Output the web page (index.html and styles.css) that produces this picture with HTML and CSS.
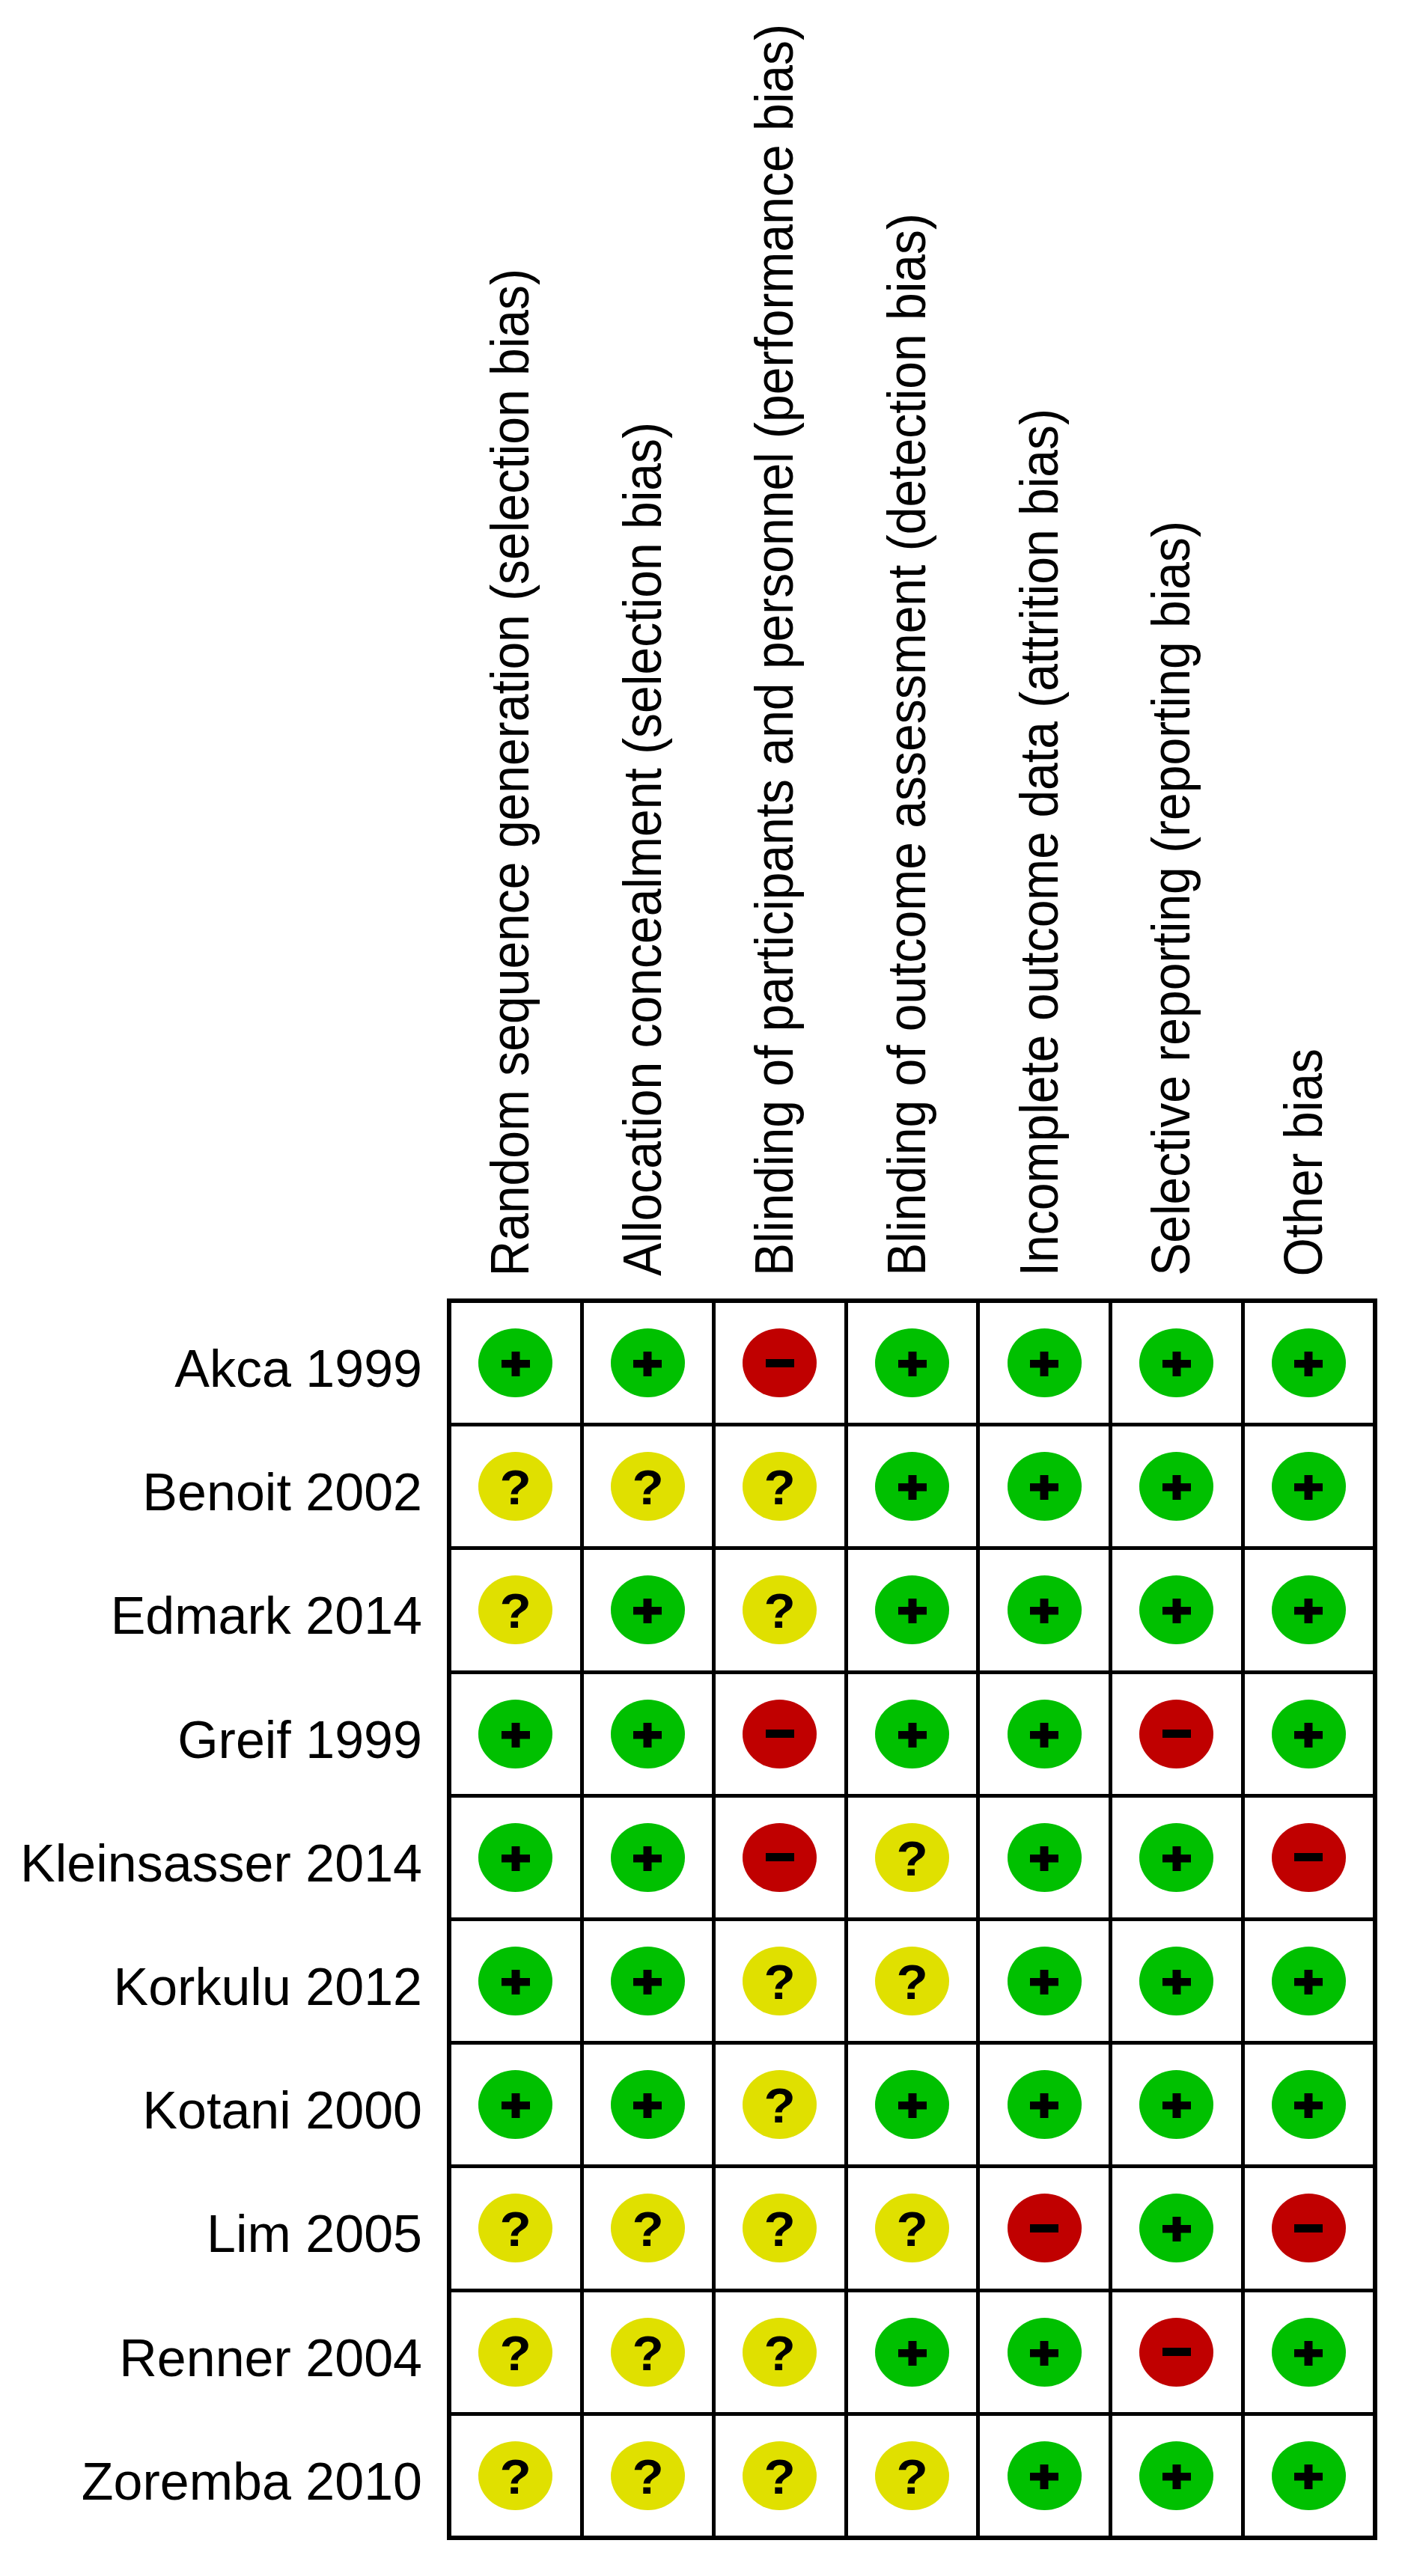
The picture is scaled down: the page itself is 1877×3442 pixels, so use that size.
FILE: index.html
```html
<!DOCTYPE html>
<html lang="en">
<head>
<meta charset="utf-8">
<title>Risk of bias summary</title>
<link rel="stylesheet" href="styles.css">
</head>
<body>
<div class="page">
  <div class="corner"></div>
  <div class="heads">
    <div class="head"><span>Random sequence generation (selection bias)</span></div>
    <div class="head"><span>Allocation concealment (selection bias)</span></div>
    <div class="head"><span>Blinding of participants and personnel (performance bias)</span></div>
    <div class="head"><span>Blinding of outcome assessment (detection bias)</span></div>
    <div class="head"><span>Incomplete outcome data (attrition bias)</span></div>
    <div class="head"><span>Selective reporting (reporting bias)</span></div>
    <div class="head"><span>Other bias</span></div>
  </div>
  <div class="labels">
    <div class="label">Akca 1999</div>
    <div class="label">Benoit 2002</div>
    <div class="label">Edmark 2014</div>
    <div class="label">Greif 1999</div>
    <div class="label">Kleinsasser 2014</div>
    <div class="label">Korkulu 2012</div>
    <div class="label">Kotani 2000</div>
    <div class="label">Lim 2005</div>
    <div class="label">Renner 2004</div>
    <div class="label">Zoremba 2010</div>
  </div>
  <div class="board" id="board"></div>
</div>
<script src="app.js"></script>
</body>
</html>
```

FILE: styles.css
```css
html, body {
  margin: 0;
  padding: 0;
  background: #ffffff;
}
body {
  width: 1877px;
  height: 3442px;
  overflow: hidden;
  font-family: "Liberation Sans", Arial, sans-serif;
  color: #000000;
}
.page {
  display: grid;
  grid-template-columns: 597px auto;
  grid-template-rows: 1735px auto;
}
.heads {
  display: grid;
  grid-template-columns: repeat(7, 171.6px);
  column-gap: 5px;
  padding: 0 6px 30px 6px;
  align-items: end;
  box-sizing: border-box;
  height: 1735px;
}
.head {
  display: flex;
  justify-content: center;
  padding-right: 15px;
}
.head span {
  writing-mode: vertical-rl;
  transform: rotate(180deg) scaleX(1.1);
  font-size: 66px;
  line-height: 1;
  white-space: nowrap;
}
.labels {
  display: grid;
  grid-template-rows: repeat(10, 160.2px);
  row-gap: 5px;
  padding: 6px 33px 6px 0;
  justify-items: end;
}
.label {
  display: flex;
  align-items: center;
  padding-top: 16px;
  font-size: 70px;
  white-space: nowrap;
}
.board {
  display: grid;
  grid-template-columns: repeat(7, 171.6px);
  grid-template-rows: repeat(10, 160.2px);
  gap: 5px;
  padding: 6px;
  background: #000000;
  width: max-content;
}
.cell {
  background: #ffffff;
  display: flex;
  align-items: center;
  justify-content: center;
}
.sym {
  width: 99px;
  height: 92px;
  border-radius: 50%;
  display: flex;
  align-items: center;
  justify-content: center;
}
.sym.plus { background: #00c000; }
.sym.minus { background: #c00000; }
.sym.unclear { background: #e0e000; }
.sym svg { display: block; }
.sym .plus-icon { margin-top: 3px; }
.q {
  font-weight: bold;
  font-size: 64px;
  line-height: 1;
  padding-top: 4px;
  transform: scaleX(1.08);
}
```

FILE: app.js
```js
(function () {
  var data = [
    "++-++++",
    "???++++",
    "?+?++++",
    "++-++-+",
    "++-?++-",
    "++??+++",
    "++?++++",
    "????-+-",
    "???++-+",
    "????+++"
  ];
  var plusSvg = '<svg class="plus-icon" width="38" height="33" viewBox="0 0 38 33"><rect x="0" y="11" width="38" height="10.5" fill="#000"/><rect x="13.5" y="0" width="11" height="33" fill="#000"/></svg>';
  var minusSvg = '<svg width="38" height="11" viewBox="0 0 38 11"><rect x="0" y="0" width="38" height="11" fill="#000"/></svg>';
  var board = document.getElementById('board');
  var html = '';
  data.forEach(function (row) {
    row.split('').forEach(function (c) {
      var inner;
      if (c === '+') inner = '<div class="sym plus">' + plusSvg + '</div>';
      else if (c === '-') inner = '<div class="sym minus">' + minusSvg + '</div>';
      else inner = '<div class="sym unclear"><span class="q">?</span></div>';
      html += '<div class="cell">' + inner + '</div>';
    });
  });
  board.innerHTML = html;
})();
```
